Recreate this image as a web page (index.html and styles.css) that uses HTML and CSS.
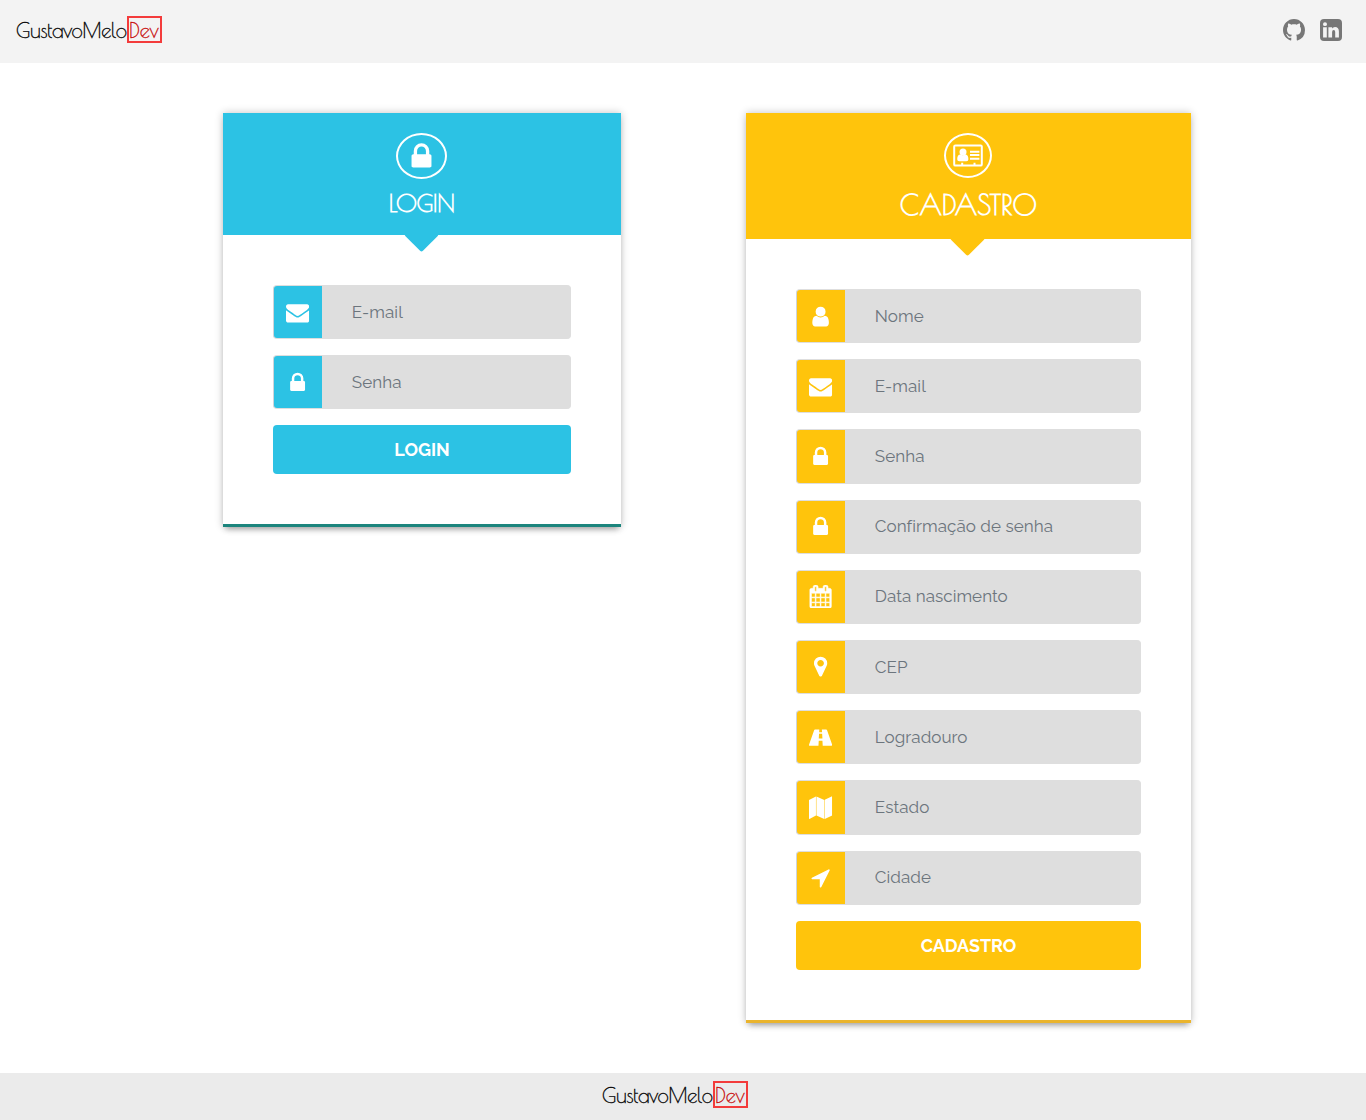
FILE: index.html
```html
<!DOCTYPE html>
<html lang="pt-BR">
<head>
<meta charset="utf-8">
<title>GustavoMeloDev</title>
<link rel="stylesheet" href="styles.css">
</head>
<body>
<svg class="sprite" aria-hidden="true">
  <symbol id="lock" viewBox="0 0 1792 1792"><path d="M640 768h512v-192q0-106-75-181t-181-75-181 75-75 181v192zm832 96v576q0 40-28 68t-68 28h-960q-40 0-68-28t-28-68v-576q0-40 28-68t68-28h32v-192q0-184 132-316t316-132 316 132 132 316v192h32q40 0 68 28t28 68z"/></symbol>
  <symbol id="envelope" viewBox="0 0 1792 1792"><path d="M1792 710v794q0 66-47 113t-113 47h-1472q-66 0-113-47t-47-113v-794q44 49 101 87 362 246 497 345 57 42 92.5 65.5t94.5 48 110 24.5h2q51 0 110-24.5t94.5-48 92.5-65.5q170-123 498-345 57-39 100-87zm0-294q0 79-49 151t-122 123q-376 261-468 325-10 7-42.5 31t-54 38.5-52 32.5-57.5 27-50 9h-2q-23 0-50-9t-57.5-27-52-32.5-54-38.5-42.5-31q-91-64-262-182.5t-205-142.5q-62-42-117-115.5t-55-136.5q0-78 41.5-130t118.5-52h1472q65 0 112.5 47t47.5 113z"/></symbol>
  <symbol id="user" viewBox="0 0 1792 1792"><path d="M1536 1399q0 109-62.5 187t-150.5 78h-854q-88 0-150.5-78t-62.5-187q0-85 8.5-160.5t31.5-152 58.5-131 94-89 134.5-34.5q131 128 313 128t313-128q76 0 134.5 34.5t94 89 58.5 131 31.5 152 8.5 160.5zm-256-887q0 159-112.5 271.5t-271.5 112.5-271.5-112.5-112.5-271.5 112.5-271.5 271.5-112.5 271.5 112.5 112.5 271.5z"/></symbol>
  <symbol id="calendar" viewBox="0 0 1792 1792"><path stroke="currentColor" stroke-width="40" d="M192 1664h288v-288h-288v288zm352 0h320v-288h-320v288zm-352-352h288v-320h-288v320zm352 0h320v-320h-320v320zm-352-384h288v-288h-288v288zm736 736h320v-288h-320v288zm-384-736h320v-288h-320v288zm768 736h288v-288h-288v288zm-384-352h320v-320h-320v320zm-352-864v-288q0-13-9.5-22.5t-22.5-9.5h-64q-13 0-22.5 9.5t-9.5 22.5v288q0 13 9.5 22.5t22.5 9.5h64q13 0 22.5-9.5t9.5-22.5zm736 864h288v-320h-288v320zm-384-384h320v-288h-320v288zm384 0h288v-288h-288v288zm32-480v-288q0-13-9.5-22.5t-22.5-9.5h-64q-13 0-22.5 9.5t-9.5 22.5v288q0 13 9.5 22.5t22.5 9.5h64q13 0 22.5-9.5t9.5-22.5zm384-64v1280q0 52-38 90t-90 38h-1408q-52 0-90-38t-38-90v-1280q0-52 38-90t90-38h128v-96q0-66 47-113t113-47h64q66 0 113 47t47 113v96h384v-96q0-66 47-113t113-47h64q66 0 113 47t47 113v96h128q52 0 90 38t38 90z"/></symbol>
  <symbol id="marker" viewBox="0 0 1792 1792"><path d="M1152 640q0-106-75-181t-181-75-181 75-75 181 75 181 181 75 181-75 75-181zm256 0q0 109-33 179l-364 774q-16 33-47.5 52t-67.5 19-67.5-19-46.5-52l-365-774q-33-70-33-179 0-212 150-362t362-150 362 150 150 362z"/></symbol>
  <symbol id="road" viewBox="0 0 24 24"><path fill-rule="evenodd" d="M6.2 3.5h4.5l-.2 3h3l-.2-3h4.5q.6 0 .9.8l5.2 14.8q.4 1.4-.6 1.4h-9.1l-.3-5.3h-3.8l-.3 5.3H.7q-1 0-.6-1.4L5.3 4.3q.3-.8.9-.8zm4.2 4.6-.3 4.9h3.8l-.3-4.9z"/></symbol>
  <symbol id="map" viewBox="0 0 24 24"><path d="M0 4.1 7.2.5v19.8L.5 23.7q-.5.1-.5-.5zM7.7.5l8.1 3.6v19.6l-8.1-3.5zM16.3 4 23.4.4q.6-.2.6.5v19.2l-7.7 3.6z"/></symbol>
  <symbol id="arrow" viewBox="0 0 1792 1792"><path d="M1593 349l-640 1280q-17 35-57 35-5 0-15-2-22-5-35.5-22.5t-13.5-39.5v-576h-576q-22 0-39.5-13.5t-22.5-35.5 4-42 29-30l1280-640q13-7 29-7 27 0 45 19 15 14 18.5 34.5t-6.5 39.5z"/></symbol>
</svg>

<header class="topbar">
  <a class="brand">GustavoMelo<span class="brand-dev">Dev</span></a>
  <nav class="social">
    <svg class="social-icon" viewBox="0 0 16 16"><path d="M8 0C3.58 0 0 3.58 0 8c0 3.54 2.29 6.53 5.47 7.59.4.07.55-.17.55-.38 0-.19-.01-.82-.01-1.49-2.01.37-2.53-.49-2.69-.94-.09-.23-.48-.94-.82-1.13-.28-.15-.68-.52-.01-.53.63-.01 1.08.58 1.23.82.72 1.21 1.87.87 2.33.66.07-.52.28-.87.51-1.07-1.78-.2-3.64-.89-3.64-3.95 0-.87.31-1.59.82-2.15-.08-.2-.36-1.02.08-2.12 0 0 .67-.21 2.2.82.64-.18 1.32-.27 2-.27s1.36.09 2 .27c1.53-1.04 2.2-.82 2.2-.82.44 1.1.16 1.92.08 2.12.51.56.82 1.27.82 2.15 0 3.07-1.87 3.75-3.65 3.95.29.25.54.73.54 1.48 0 1.07-.01 1.93-.01 2.2 0 .21.15.46.55.38A8 8 0 0 0 16 8c0-4.42-3.58-8-8-8z"/></svg>
    <svg class="social-icon" viewBox="0 0 22 22"><path fill-rule="evenodd" d="M4 0h14q4 0 4 4v14q0 4-4 4H4q-4 0-4-4V4q0-4 4-4zM3.1 8.3v10.2h3.7V8.3zM5 3.3a2 1.9 0 1 0 0 3.8 2 1.9 0 1 0 0-3.8zM8.4 8.3v10.2h3.7v-5.6q0-1.8 1.6-1.8 1.5 0 1.5 1.9v5.5h3.7v-5.9q0-4.6-3.9-4.6-2 0-2.9 1.6V8.3z"/></svg>
  </nav>
</header>

<main class="content">
  <section class="card card-login">
    <div class="card-head">
      <span class="badge"><svg class="badge-lock"><use href="#lock"/></svg></span>
      <h1 class="title">LOGIN</h1>
    </div>
    <form class="form">
      <label class="field"><span class="field-icon"><svg><use href="#envelope"/></svg></span><input class="input" placeholder="E-mail"></label>
      <label class="field"><span class="field-icon"><svg><use href="#lock"/></svg></span><input class="input" placeholder="Senha"></label>
      <button class="submit" type="button">LOGIN</button>
    </form>
  </section>

  <section class="card card-signup">
    <div class="card-head">
      <span class="badge"><svg class="badge-id" viewBox="0 0 30 24"><rect x="1.2" y="1.4" width="27.6" height="20.2" rx="1.2" fill="none" stroke="currentColor" stroke-width="2"/><circle cx="10" cy="7.9" r="3.5"/><path d="M4.2 15.3q0-4.8 3.2-4.8 2.4 1.5 4.8 0 3.2 0 3.2 4.8 0 2-2 2H6.2q-2 0-2-2zM17 6.7h9.4v2H17zM17 10.1h9.4v2H17zM17 13.7h9.4v2H17zM8.2 18.8h2v2.7h-2zM20.5 18.8h2v2.7h-2z"/></svg></span>
      <h1 class="title">CADASTRO</h1>
    </div>
    <form class="form">
      <label class="field"><span class="field-icon"><svg><use href="#user"/></svg></span><input class="input" placeholder="Nome"></label>
      <label class="field"><span class="field-icon"><svg><use href="#envelope"/></svg></span><input class="input" placeholder="E-mail"></label>
      <label class="field"><span class="field-icon"><svg><use href="#lock"/></svg></span><input class="input" placeholder="Senha"></label>
      <label class="field"><span class="field-icon"><svg><use href="#lock"/></svg></span><input class="input" placeholder="Confirmação de senha"></label>
      <label class="field"><span class="field-icon"><svg><use href="#calendar"/></svg></span><input class="input" placeholder="Data nascimento"></label>
      <label class="field"><span class="field-icon"><svg><use href="#marker"/></svg></span><input class="input" placeholder="CEP"></label>
      <label class="field"><span class="field-icon"><svg><use href="#road"/></svg></span><input class="input" placeholder="Logradouro"></label>
      <label class="field"><span class="field-icon"><svg><use href="#map"/></svg></span><input class="input" placeholder="Estado"></label>
      <label class="field"><span class="field-icon"><svg><use href="#arrow"/></svg></span><input class="input" placeholder="Cidade"></label>
      <button class="submit" type="button">CADASTRO</button>
    </form>
  </section>
</main>

<footer class="footer"><a class="brand">GustavoMelo<span class="brand-dev">Dev</span></a></footer>
</body>
</html>
```
FILE: styles.css
```css
* { box-sizing: border-box; }
body { margin: 0; font-family: Raleway, Lato, sans-serif; background: #fff; }
svg { display: block; fill: currentColor; }
.sprite { display: none; }

.topbar {
  display: flex;
  justify-content: space-between;
  align-items: flex-start;
  height: 63px;
  padding: 16px 24px 0 16px;
  background: #f3f3f3;
}
.brand {
  display: flex;
  width: 146px;
  height: 27px;
  font: 400 20.4px/28px "Poiret One", Lato, sans-serif;
  -webkit-text-stroke: .35px currentColor;
  letter-spacing: -.3px;
  color: #000;
}
.brand-dev {
  flex: none;
  width: 35px;
  margin-left: auto;
  border: 2px solid #f33b3b;
  line-height: 24px;
  letter-spacing: -.1px;
  color: #c80d0d;
}
.social { display: flex; gap: 15px; padding-top: 3px; color: #777; }
.social-icon { width: 22px; height: 22px; }

.content {
  display: flex;
  align-items: flex-start;
  gap: 125px;
  padding: 50px 0 50px 223px;
}
.card {
  background: #fff;
  border-bottom: 3px solid;
  box-shadow: 0 0 8px rgba(0, 0, 0, .24), 0 5px 6px -3px rgba(0, 0, 0, .28);
}
.card-login { --main: #2cc2e4; width: 398px; border-color: #1c857d; }
.card-signup { --main: #ffc40c; width: 445px; border-color: #eab42d; }
.card-head {
  position: relative;
  display: flex;
  flex-direction: column;
  align-items: center;
  height: 122px;
  padding-top: 20px;
  background: var(--main);
  color: #fff;
}
.card-signup .card-head { height: 126px; }
.card-head::after {
  content: "";
  position: absolute;
  left: calc(50% - 13.5px);
  bottom: -12px;
  width: 25px;
  height: 25px;
  border-radius: 2px;
  background: var(--main);
  transform: rotate(45deg);
}
.badge {
  display: flex;
  align-items: center;
  justify-content: center;
  width: 51px;
  height: 46px;
  margin-right: 1.5px;
  border: 2px solid #fff;
  border-radius: 50%;
}
.card-signup .badge { width: 48px; height: 45px; }
.badge-lock { width: 31px; height: 31px; }
.badge-id { width: 30px; height: 24px; }
.title { margin: 7px 0 0; font: 700 24px/34px "Poiret One", Lato, sans-serif; letter-spacing: -.4px; text-indent: -.6px; }
.card-signup .title { margin-top: 8px; font-size: 28px; line-height: 38px; letter-spacing: -.15px; }

.form { display: flex; flex-direction: column; gap: 16px; padding: 50px; }
.field {
  display: flex;
  height: 54.2px;
  border: 1px solid #dedede;
  border-left-color: #ced4da;
  border-radius: 4px;
  overflow: hidden;
  background: #dedede;
}
.field-icon {
  display: flex;
  flex: none;
  align-items: center;
  justify-content: center;
  width: 48px;
  background: var(--main);
  color: #fff;
}
.field-icon svg { width: 23.2px; height: 23.2px; }
.input {
  flex: 1;
  min-width: 0;
  padding: 0 30px .8px 29.8px;
  border: 0;
  background: none;
  font: 400 17px Raleway, Lato, sans-serif;
  letter-spacing: .06px;
}
.input::placeholder { color: #6c757d; opacity: 1; }
.submit {
  height: 49px;
  padding: 0;
  border: 0;
  border-radius: 4px;
  background: var(--main);
  color: #fff;
  font: 700 17.9px Raleway, Lato, sans-serif;
}

.footer {
  display: flex;
  justify-content: center;
  height: 47px;
  padding: 8px 16px 0 0;
  background: #ebebeb;
}
```
